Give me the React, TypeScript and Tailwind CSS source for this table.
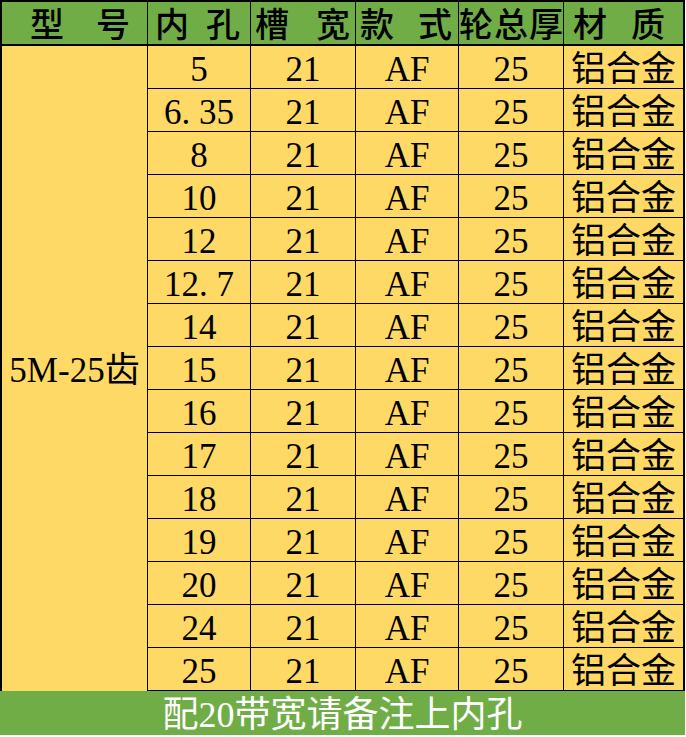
import React from 'react';

const bores = ['5', '6.35', '8', '10', '12', '12.7', '14', '15', '16', '17', '18', '19', '20', '24', '25'];

// header cells: two-char labels are spread across the cell like the sheet does
const headers: { chars: string[]; className: string }[] = [
    { chars: ['型', '号'], className: 'pl-[28px] pr-[17px] border-r' },
    { chars: ['内', '孔'], className: 'pl-[7px] pr-[10px] border-r' },
    { chars: ['槽', '宽'], className: 'pl-[4px] pr-[5px] border-r' },
    { chars: ['款', '式'], className: 'pl-[4px] pr-[6px] border-r' },
    { chars: ['轮', '总', '厚'], className: 'pl-0 pr-0 border-r' },
    { chars: ['材', '质'], className: 'pl-[9px] pr-[18px]' },
];

// SimSun keeps the dot half-width, so give it a half-em box
const Bore: React.FC<{ value: string }> = ({ value }) => {
    const [a, b] = value.split('.');
    if (b === undefined) return <>{value}</>;
    return (
        <>
            {a}
            <span className="inline-block w-[0.5em] text-left">.</span>
            {b}
        </>
    );
};

const App: React.FC = () => {
    return (
        <div className="w-[686px] h-[737px] bg-white font-[family-name:Liberation_Serif,Noto_Sans_CJK_SC,serif] text-black">
            <div className="w-[685px] border-2 border-b-0 border-black">
                {/* header */}
                <div className="grid grid-cols-[146px_103px_105px_103px_105px_119px] h-[44px] bg-[#70ad47] border-b-2 border-black">
                    {headers.map((h, i) => (
                        <div
                            key={i}
                            className={`flex items-center justify-between pt-[6px] border-black text-[34px] leading-none font-medium ${h.className}`}
                        >
                            {h.chars.map(c => (
                                <span key={c}>{c}</span>
                            ))}
                        </div>
                    ))}
                </div>

                {/* body */}
                <div className="flex bg-[#ffd966]">
                    <div className="w-[146px] shrink-0 border-r border-black flex items-center justify-center pt-[4px] text-[35px] leading-none">
                        5M-25齿
                    </div>
                    <div className="flex-1">
                        {bores.map(b => (
                            <div
                                key={b}
                                className="grid grid-cols-[103px_105px_103px_105px_119px] h-[43px] border-b border-black text-[35px] leading-none"
                            >
                                <div className="flex items-center justify-center pt-[4px] border-r border-black">
                                    <Bore value={b} />
                                </div>
                                <div className="flex items-center justify-center pt-[4px] border-r border-black">21</div>
                                <div className="flex items-center justify-center pt-[4px] border-r border-black">AF</div>
                                <div className="flex items-center justify-center pt-[4px] border-r border-black">25</div>
                                <div className="flex items-center justify-center pt-[4px]">铝合金</div>
                            </div>
                        ))}
                    </div>
                </div>
            </div>

            {/* footer note */}
            <div className="w-[685px] h-[44px] bg-[#70ad47] flex items-center justify-center pt-[4px] text-white text-[36px] leading-none">
                配20带宽请备注上内孔
            </div>
        </div>
    );
};

export default App;
